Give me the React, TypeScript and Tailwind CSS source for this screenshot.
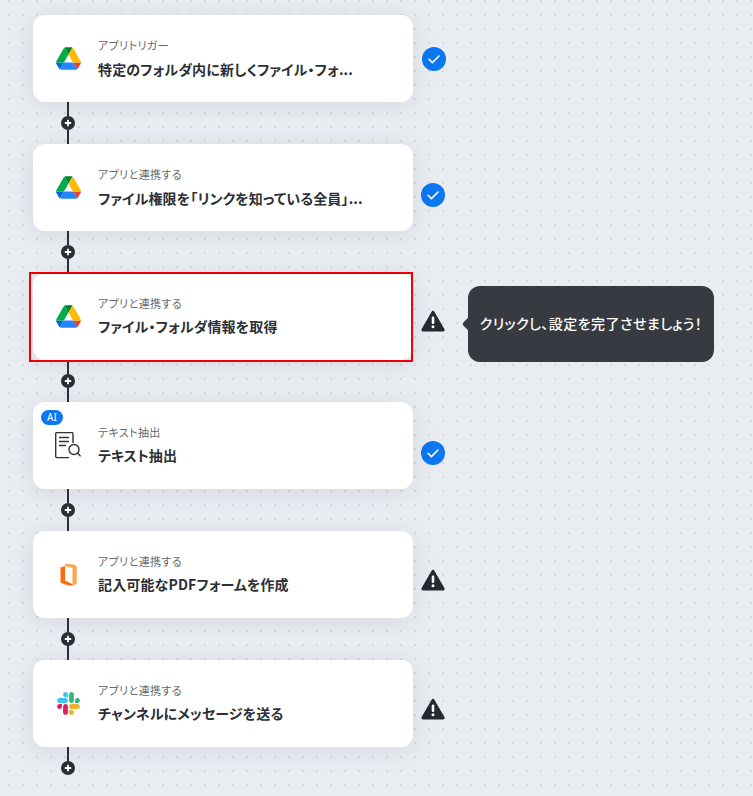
import { Fragment, type ReactNode } from 'react'

function DriveIcon() {
  return (
    <svg viewBox="0 0 87.3 78" className="w-[25px] h-[23px]">
      <path d="m6.6 66.85 3.85 6.65c.8 1.4 1.95 2.5 3.3 3.3l13.75-23.8h-27.5c0 1.55.4 3.1 1.2 4.5z" fill="#0066da" />
      <path d="m43.65 25-13.75-23.8c-1.35.8-2.5 1.9-3.3 3.3l-25.4 44a9.06 9.06 0 0 0 -1.2 4.5h27.5z" fill="#00ac47" />
      <path d="m73.55 76.8c1.35-.8 2.5-1.9 3.3-3.3l1.6-2.75 7.65-13.25c.8-1.4 1.2-2.95 1.2-4.5h-27.502l5.852 11.5z" fill="#ea4335" />
      <path d="m43.65 25 13.75-23.8c-1.35-.8-2.9-1.2-4.5-1.2h-18.5c-1.6 0-3.15.45-4.5 1.2z" fill="#00832d" />
      <path d="m59.8 53h-32.3l-13.75 23.8c1.35.8 2.9 1.2 4.5 1.2h50.8c1.6 0 3.15-.45 4.5-1.2z" fill="#2684fc" />
      <path d="m73.4 26.5-12.7-22c-.8-1.4-1.95-2.5-3.3-3.3l-13.75 23.8 16.15 28h27.45c0-1.55-.4-3.1-1.2-4.5z" fill="#ffba00" />
    </svg>
  )
}

function DocIcon() {
  return (
    <svg viewBox="0 0 26 27" className="w-[26px] h-[27px]" fill="none" stroke="#2f343b" strokeWidth="1.4">
      <path d="M18 11V1.6a1 1 0 0 0-1-1H1.7a1 1 0 0 0-1 1v23a1 1 0 0 0 1 1H14" />
      <path d="M4 5.5h10M4 9.5h10M4 13.5h7" />
      <circle cx="19" cy="17.5" r="5" />
      <path d="m22.6 21 3 3.4" />
    </svg>
  )
}

function OfficeIcon() {
  return (
    <svg viewBox="0 0 17 24" className="w-[17px] h-[24px]">
      <path d="M0.5 4.6 5 3 5 17.6 12.5 21.2 12.5 23 5 21.4 0.5 19.4z" fill="#ff6a0d" />
      <path d="M5 0.8 14 1.6 16.7 3.4 16.7 20.6 12.5 23 12.5 4.8 5 3z" fill="#ffa64d" />
    </svg>
  )
}

function SlackIcon() {
  return (
    <svg viewBox="0 0 127 127" className="w-[23px] h-[23px]">
      <path d="M27.2 80c0 7.3-5.9 13.2-13.2 13.2C6.7 93.2.8 87.3.8 80c0-7.3 5.9-13.2 13.2-13.2h13.2V80zm6.6 0c0-7.3 5.9-13.2 13.2-13.2 7.3 0 13.2 5.9 13.2 13.2v33c0 7.3-5.9 13.2-13.2 13.2-7.3 0-13.2-5.9-13.2-13.2V80z" fill="#E01E5A" />
      <path d="M47 27c-7.3 0-13.2-5.9-13.2-13.2C33.8 6.5 39.7.6 47 .6c7.3 0 13.2 5.9 13.2 13.2V27H47zm0 6.7c7.3 0 13.2 5.9 13.2 13.2 0 7.3-5.9 13.2-13.2 13.2H13.9C6.6 60.1.7 54.2.7 46.9c0-7.3 5.9-13.2 13.2-13.2H47z" fill="#36C5F0" />
      <path d="M99.9 46.9c0-7.3 5.9-13.2 13.2-13.2 7.3 0 13.2 5.9 13.2 13.2 0 7.3-5.9 13.2-13.2 13.2H99.9V46.9zm-6.6 0c0 7.3-5.9 13.2-13.2 13.2-7.3 0-13.2-5.9-13.2-13.2V13.8C66.9 6.5 72.8.6 80.1.6c7.3 0 13.2 5.9 13.2 13.2v33.1z" fill="#2EB67D" />
      <path d="M80.1 99.8c7.3 0 13.2 5.9 13.2 13.2 0 7.3-5.9 13.2-13.2 13.2-7.3 0-13.2-5.9-13.2-13.2V99.8h13.2zm0-6.6c-7.3 0-13.2-5.9-13.2-13.2 0-7.3 5.9-13.2 13.2-13.2h33.1c7.3 0 13.2 5.9 13.2 13.2 0 7.3-5.9 13.2-13.2 13.2H80.1z" fill="#ECB22E" />
    </svg>
  )
}

function CheckBadge() {
  return (
    <svg viewBox="0 0 24 24" className="w-6 h-6 block">
      <circle cx="12" cy="12" r="12" fill="#0b77f0" />
      <path d="m7 12.3 3.4 3.3L17 9" fill="none" stroke="#fff" strokeWidth="1.6" strokeLinecap="round" strokeLinejoin="round" />
    </svg>
  )
}

function WarnBadge() {
  return (
    <svg viewBox="0 0 24 22" className="w-6 h-[22px] block">
      <path d="M12 2.5 22 19.8H2z" fill="#262a31" stroke="#262a31" strokeWidth="3.2" strokeLinejoin="round" />
      <rect x="10.7" y="6.5" width="2.6" height="7.5" rx="1.2" fill="#fff" />
      <circle cx="12" cy="16.8" r="1.5" fill="#fff" />
    </svg>
  )
}

function Connector({ last }: { last?: boolean }) {
  return (
    <div className="flex flex-col items-center w-[14px] ml-[28px]">
      <div className="h-[14px] w-[2px] bg-[#2b2f36]" />
      <div className="w-[14px] h-[14px] rounded-full bg-[#2b2f36] flex items-center justify-center">
        <svg viewBox="0 0 8 8" className="w-2 h-2">
          <path d="M4 .8v6.4M.8 4h6.4" stroke="#fff" strokeWidth="1.8" />
        </svg>
      </div>
      {!last && <div className="h-[14px] w-[2px] bg-[#2b2f36]" />}
    </div>
  )
}

type Step = {
  label: string
  title: string
  icon: ReactNode
  status: 'ok' | 'warn'
  statusClass: string
  cut?: boolean
  selected?: boolean
  ai?: boolean
}

const steps: Step[] = [
  { label: 'アプリトリガー', title: '特定のフォルダ内に新しくファイル・フォ...', icon: <DriveIcon />, status: 'ok', statusClass: 'ml-[9px] mt-[32px]', cut: true },
  { label: 'アプリと連携する', title: 'ファイル権限を「リンクを知っている全員」...', icon: <DriveIcon />, status: 'ok', statusClass: 'ml-[8px] mt-[39px]', cut: true },
  { label: 'アプリと連携する', title: 'ファイル・フォルダ情報を取得', icon: <DriveIcon />, status: 'warn', statusClass: 'ml-[8px] mt-[37px]', selected: true },
  { label: 'テキスト抽出', title: 'テキスト抽出', icon: <DocIcon />, status: 'ok', statusClass: 'ml-[8px] mt-[39px]', ai: true },
  { label: 'アプリと連携する', title: '記入可能なPDFフォームを作成', icon: <OfficeIcon />, status: 'warn', statusClass: 'ml-[8px] mt-[38px]' },
  { label: 'アプリと連携する', title: 'チャンネルにメッセージを送る', icon: <SlackIcon />, status: 'warn', statusClass: 'ml-[8px] mt-[38px]' },
]

function App() {
  return (
    <div className="h-[796px] overflow-hidden pt-[15px] pl-[33px] bg-[#e9ecf1] bg-[radial-gradient(circle_at_1px_1px,#d5d8de_1.5px,transparent_1.5px)] bg-[size:14px_14px] bg-[position:8px_0px] font-['Noto_Sans_CJK_JP','Noto_Sans',sans-serif] [font-feature-settings:'palt']">
      {steps.map((step, i) => (
        <Fragment key={i}>
          <div className="relative flex items-start h-[87px]">
            <div className="relative w-[380px] h-[87px] rounded-xl bg-white shadow-[0_3px_24px_rgba(40,50,70,0.1)] flex items-center">
              <div className="w-[70px] flex justify-center shrink-0">{step.icon}</div>
              <div className={step.cut ? 'ml-[-5px] min-w-0 pb-[1px]' : 'ml-[-5px] min-w-0 pb-[3px]'}>
                <div className="text-[11px] leading-4 tracking-[0.4px] text-[#63686f]">{step.label}</div>
                <div className={step.cut ? 'mt-[6px] text-sm leading-5 tracking-[0.14px] font-bold text-[#2b2f36] whitespace-nowrap' : 'mt-[5px] text-sm leading-5 tracking-[0.14px] font-bold text-[#2b2f36] whitespace-nowrap'}>{step.title}</div>
              </div>
              {step.ai && (
                <div className="absolute left-[8px] top-[8px] w-[22px] h-[15px] rounded-full bg-[#0b77f0] text-white text-[10px] leading-[15px] text-center font-['Noto_Sans',sans-serif]">AI</div>
              )}
            </div>
            <div className={step.statusClass}>{step.status === 'ok' ? <CheckBadge /> : <WarnBadge />}</div>
            {step.selected && (
              <>
                <div className="absolute left-[-4px] top-[-1px] w-[384px] h-[90px] border-2 border-[#f00000]" />
                <div className="absolute left-[435px] top-[13px] w-[246px] h-[76px] rounded-[12px] bg-[#373b41] flex items-center justify-center pb-[2px] text-white text-sm tracking-[0.45px] font-medium whitespace-nowrap">
                  <div className="absolute left-[-4px] top-[33px] w-[10px] h-[10px] rotate-45 rounded-[2px] bg-[#373b41]" />
                  <span className="relative">クリックし、設定を完了させましょう！</span>
                </div>
              </>
            )}
          </div>
          <Connector last={i === steps.length - 1} />
        </Fragment>
      ))}
    </div>
  )
}

export default App
